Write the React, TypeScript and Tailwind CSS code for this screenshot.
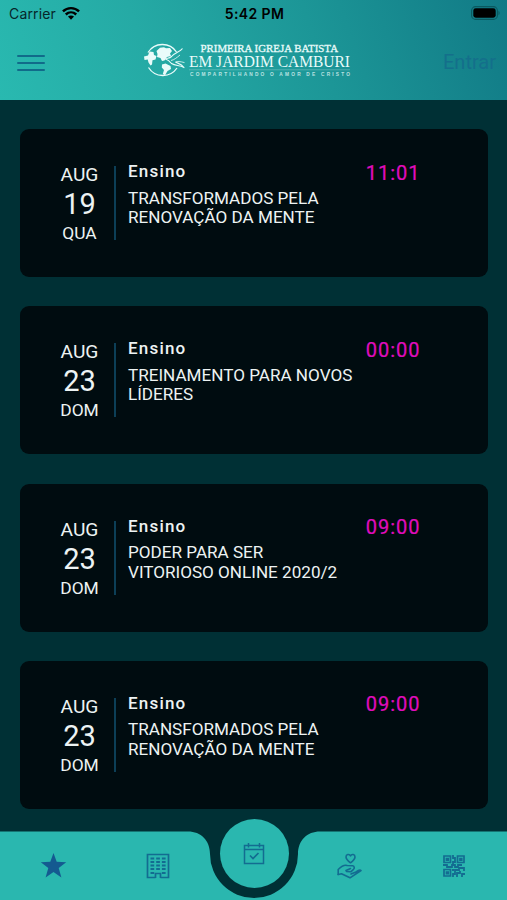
import React from 'react';

interface EventItem {
  id: number;
  month: string;
  day: string;
  weekday: string;
  category: string;
  title: string[];
  time: string;
}

const EVENTS: EventItem[] = [
  { id: 1, month: 'AUG', day: '19', weekday: 'QUA', category: 'Ensino', title: ['TRANSFORMADOS PELA', 'RENOVAÇÃO DA MENTE'], time: '11:01' },
  { id: 2, month: 'AUG', day: '23', weekday: 'DOM', category: 'Ensino', title: ['TREINAMENTO PARA NOVOS', 'LÍDERES'], time: '00:00' },
  { id: 3, month: 'AUG', day: '23', weekday: 'DOM', category: 'Ensino', title: ['PODER PARA SER', 'VITORIOSO ONLINE 2020/2'], time: '09:00' },
  { id: 4, month: 'AUG', day: '23', weekday: 'DOM', category: 'Ensino', title: ['TRANSFORMADOS PELA', 'RENOVAÇÃO DA MENTE'], time: '09:00' },
];

const StatusBar = () => (
  <div className="grid h-[28px] grid-cols-3 items-center pl-[9px] pr-[7px] font-['Inter',sans-serif] text-black">
    <div className="flex items-center gap-[6px]">
      <span className="text-[14px] leading-none tracking-[0.15px] text-[#06262a]">Carrier</span>
      <svg className="-mt-[2px]" width="18" height="14" viewBox="0 0 19 14" fill="none" stroke="#000" strokeWidth="2.6">
        <path d="M1 5.3C5.8.7 13.2.7 18 5.3" />
        <path d="M4 8.6c3.2-3 7.8-3 11 0" />
        <path d="M9.5 14 6.3 10.8c1.8-1.6 4.6-1.6 6.4 0z" fill="#000" stroke="none" />
      </svg>
    </div>
    <span className="text-center text-[14px] font-semibold leading-none tracking-[0.4px]">5:42 PM</span>
    <svg className="-mt-[2px] justify-self-end" width="29" height="14" viewBox="0 0 29 14">
      <rect x=".6" y=".6" width="25.8" height="12.8" rx="4" fill="none" stroke="#0a5960" strokeWidth="1.1" />
      <rect x="2.3" y="2.3" width="22.4" height="9.4" rx="2.4" />
      <path d="M27.5 4.8c1.5.7 1.5 3.7 0 4.4z" fill="#0a5960" />
    </svg>
  </div>
);

const Logo = () => (
  <svg className="overflow-visible" width="208" height="38" viewBox="0 0 208 38" fill="#e9fbfa">
    {/* Globe with the dove flying out of it */}
    <path d="M4 11.5A17 17 0 0 1 32.5 11M4.5 26.5A17 17 0 0 0 33 27" fill="none" stroke="#e9fbfa" strokeWidth="1.3" />
    <path d="M0 15.5l4-1 1.5-4 4 .5.5 3 2.5 1-1 3.5-3 .8-.5 4.2-1.5 1-2-3-.8-3L.5 19z" />
    <path d="M12.5 10l3.5-3.2 4-.6 2 1 4-.2 2 3-2 2.6 1 2.4-4 1-2.5 3.5-2.5.5-1.5-3-3.5-1 .5-3z" />
    <path d="M18 23.5l3.5-1 5 2.5.5 3-3.5 2-2.5 4.2-2.2-1.2 1.2-4-2.2-2.5z" />
    <path d="M38.500 7.500C36 11 30 12 27.500 15.500c-2 2-4.500 1.500-6 2.500 2.500.8 4 2 6 4.500 4 2.500 8 1.500 12.500 4-3-4-6-4-8.500-5.500" fill="none" stroke="#e9fbfa" strokeWidth="1.200" strokeLinejoin="round" />
    <path d="M31.500 21c2-.8 4.500-.6 9 .6M27 19.500c3-.5 6-3 9-5.500" fill="none" stroke="#e9fbfa" strokeWidth=".8" />
    <g fontFamily="'Liberation Serif', serif">
      <text x="56.5" y="11" fontSize="10.8" stroke="#e9fbfa" strokeWidth=".3" textLength="137.5" lengthAdjust="spacingAndGlyphs">PRIMEIRA IGREJA BATISTA</text>
      <text x="45" y="26" fontSize="17" textLength="161" lengthAdjust="spacingAndGlyphs">EM JARDIM CAMBURI</text>
    </g>
    <path d="M45 28.8h161" stroke="#e9fbfa" strokeWidth=".5" opacity=".5" />
    <text x="46" y="35.2" fontFamily="'Liberation Sans', sans-serif" fontSize="4.8" fontWeight="700" textLength="160" opacity=".75">COMPARTILHANDO O AMOR DE CRISTO</text>
  </svg>
);

const Header = () => (
  <header className="h-[100px] shrink-0 bg-[linear-gradient(70deg,#29b9b0_0%,#25aaa5_30%,#1c9697_62%,#117a86_100%)]">
    <StatusBar />
    <div className="grid h-[70px] grid-cols-[1fr_auto_1fr] items-center pl-[17px] pr-[11px]">
      <button className="flex w-[28px] flex-col gap-[5.3px]" aria-label="Menu">
        <span className="h-[2px] rounded-full bg-[#116b8a]" />
        <span className="h-[2px] rounded-full bg-[#116b8a]" />
        <span className="h-[2px] rounded-full bg-[#116b8a]" />
      </button>
      <div className="mb-[7px] mr-[17px]">
        <Logo />
      </div>
      <button className="mb-[2px] justify-self-end text-[20px] leading-none text-[#146f8b]">Entrar</button>
    </div>
  </header>
);

const EventCard: React.FC<{ event: EventItem }> = ({ event }) => (
  <article className="flex h-[148px] shrink-0 rounded-[9px] bg-[#000c10] pl-[34px] pr-[67.5px] pt-[30px] text-[#edf3f3]">
    <div className="flex w-[51px] flex-col items-center">
      <span className="mt-[5px] text-[19.2px] leading-[22px]">{event.month}</span>
      <span className="mt-[2px] text-[29px] leading-[32px]">{event.day}</span>
      <span className="mt-[3px] text-[17.4px] leading-[20px]">{event.weekday}</span>
    </div>
    <div className="ml-[9px] mt-[7px] h-[74px] w-[2px] bg-[#0c3f57]" />
    <div className="ml-[12px] flex-1">
      <h2 className="text-[17px] font-medium leading-[24px] tracking-[1.2px]">{event.category}</h2>
      <p className="mt-[5.5px] whitespace-nowrap text-[17.1px] leading-[19.5px]">
        {event.title.map((line) => (
          <span key={line} className="block">{line}</span>
        ))}
      </p>
    </div>
    <time className="mt-[1.5px] text-[20px] leading-[24px] tracking-[1px] text-[#e00cbd] [-webkit-text-stroke:0.2px_#e00cbd]">{event.time}</time>
  </article>
);

const BuildingIcon = () => (
  <svg width="24" height="26" viewBox="0 0 24 26" fill="none" stroke="#136c91" strokeWidth="1.7">
    <path d="M9.5 24.5H1.5V1.5h21v23h-8M9.5 25v-4.5h5V25" />
    <path d="M4.500 5.500h3.700m2 0h3.700m2 0h3.700M4.500 9h3.700m2 0h3.700m2 0h3.700M4.500 12.500h3.700m2 0h3.700m2 0h3.700M4.500 16h3.700m2 0h3.700m2 0h3.700M4.500 20h3.700m7.700 0h3.700" strokeWidth="2" />
  </svg>
);

const CalendarIcon = () => (
  <svg width="22" height="22" viewBox="0 0 22 22" fill="none" stroke="#136c91" strokeWidth="1.5">
    <path d="M1.5 2.5h19v18h-19zM1.5 6.5h19M5.5 0v4.5M16.5 0v4.5" />
    <path d="m7 12.5 3 3 5.5-5.5" strokeWidth="1.7" />
  </svg>
);

const GiveIcon = () => (
  <svg width="25" height="26" viewBox="0 0 25 26" fill="none" stroke="#136c91" strokeWidth="1.6" strokeLinejoin="round" strokeLinecap="round">
    <path d="M13.5 9.8C10.500 7.500 9 6 9 4c0-2.800 3.300-3.300 4.500-1.200C14.700.7 18 1.200 18 4c0 2-1.500 3.500-4.500 5.800z" />
    <path d="M1.200 21.500V16.500c3-3 6-5 9-4l5.500.3c1.900.4 1.900 2.400.8 3.500l-2.700 2.500-4.300-.3" />
    <path d="m9 17.500 4.500-2M1.200 21.500l3.300-.8 8.500 4.100 11-7.300c-1-1-2.500-.5-5 1.400l-5 2.100" />
  </svg>
);

const QrIcon = () => (
  <svg width="22" height="22" viewBox="0 0 22 22" fill="none" stroke="#136c91" strokeWidth="1.7">
    <path d="M1 1h6.5v6.500H1zM14.500 1H21v6.500h-6.500zM1 14.500h6.500V21H1z" />
    <path d="M3.500 3.500h1.700v1.700H3.500zM17 3.500h1.700v1.700H17zM3.500 17h1.700v1.700H3.500z" fill="#136c91" />
    <path d="M10 0v3h2v4h-2v3M0 10h4v2h5v-2h3v2h3v-2h4M10 22v-3h2v-4h4v-2h5v3M14 22v-4h3v-2M19 22v-3h3M9 15h2" strokeWidth="1.8" />
  </svg>
);

const TabBar = () => (
  <nav className="relative h-[69px] shrink-0">
    {/* Bar surface, notched around the centre button */}
    <svg className="absolute inset-0" width="507" height="69" viewBox="0 0 507 69" fill="#2ab7af">
      <path d="M0 .5H188C201 .5 210 9.500 210 23A44 44 0 0 0 298 23C298 9.500 307 .5 320 .5H507V69H0z" />
    </svg>
    <div className="relative flex h-full items-center pl-[39.5px] pr-[42px]">
      <svg className="mr-[79px]" width="27" height="27" viewBox="0 0 27 27" fill="#145a90">
        <path d="m13.5 1 3.2 8.800 9.500.4-7.500 5.900 2.700 9.300-7.900-5.400-7.900 5.400 2.700-9.300-7.500-5.900 9.500-.4z" />
      </svg>
      <BuildingIcon />
      <div className="mb-[24px] ml-[50px] mr-[48.5px] flex size-[69px] shrink-0 items-center justify-center rounded-full bg-[#2ab7af]">
        <CalendarIcon />
      </div>
      <GiveIcon />
      <div className="ml-auto"><QrIcon /></div>
    </div>
  </nav>
);

export default function App() {
  return (
    <div className="flex h-[900px] w-[507px] flex-col overflow-hidden bg-[#003035] font-['Roboto',sans-serif]">
      <Header />
      <main className="flex min-h-0 flex-1 flex-col gap-[29.1px] overflow-hidden pl-[20px] pr-[19px] pt-[29.4px]">
        {EVENTS.map((event) => (
          <EventCard key={event.id} event={event} />
        ))}
      </main>
      <TabBar />
    </div>
  );
}
